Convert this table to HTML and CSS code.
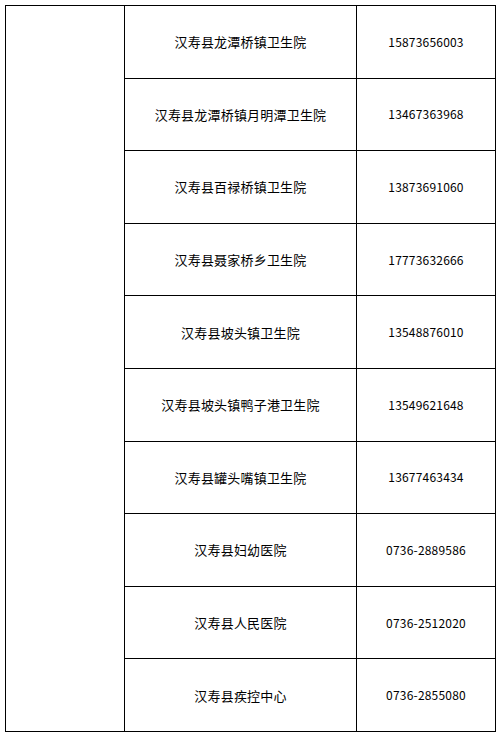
FILE: index.html
```html
<!DOCTYPE html>
<html lang="zh">
<head>
<meta charset="utf-8">
<link rel="stylesheet" href="styles.css">
</head>
<body>
<table class="grid">
  <colgroup>
    <col class="c1"><col class="c2"><col class="c3">
  </colgroup>
  <tr><td class="blank" rowspan="10"></td><td class="name">汉寿县龙潭桥镇卫生院</td><td class="tel">15873656003</td></tr>
  <tr><td class="name">汉寿县龙潭桥镇月明潭卫生院</td><td class="tel">13467363968</td></tr>
  <tr><td class="name">汉寿县百禄桥镇卫生院</td><td class="tel">13873691060</td></tr>
  <tr><td class="name">汉寿县聂家桥乡卫生院</td><td class="tel">17773632666</td></tr>
  <tr><td class="name">汉寿县坡头镇卫生院</td><td class="tel">13548876010</td></tr>
  <tr><td class="name">汉寿县坡头镇鸭子港卫生院</td><td class="tel">13549621648</td></tr>
  <tr><td class="name">汉寿县罐头嘴镇卫生院</td><td class="tel">13677463434</td></tr>
  <tr><td class="name">汉寿县妇幼医院</td><td class="tel">0736-2889586</td></tr>
  <tr><td class="name">汉寿县人民医院</td><td class="tel">0736-2512020</td></tr>
  <tr><td class="name">汉寿县疾控中心</td><td class="tel">0736-2855080</td></tr>
</table>
</body>
</html>
```
FILE: styles.css
```css
html, body {
  margin: 0;
  padding: 0;
  background: #ffffff;
}
body {
  padding: 5px 0 0 5px;
  font-family: "Noto Sans CJK SC", "Noto Sans", sans-serif;
  color: #000000;
}
.grid {
  border-collapse: collapse;
  table-layout: fixed;
  width: 490px;
}
.c1 { width: 119px; }
.c2 { width: 232px; }
.c3 { width: 139px; }
.grid td {
  border: 1px solid #000000;
  height: 71.6px;
  padding: 0;
  text-align: center;
  vertical-align: middle;
  line-height: 1;
}
.name {
  font-size: 13px;
  letter-spacing: 0.2px;
}
.tel {
  font-size: 12px;
  letter-spacing: 0.2px;
}
```
